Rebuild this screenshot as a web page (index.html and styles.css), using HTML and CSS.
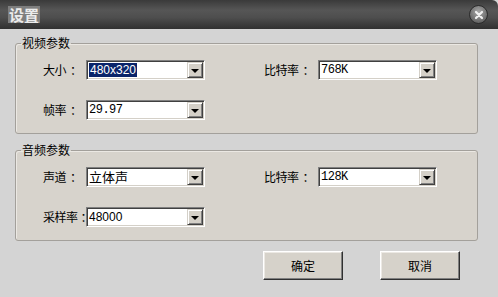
FILE: index.html
```html
<!DOCTYPE html>
<html lang="zh-CN">
<head>
    <meta charset="UTF-8">
    <title>设置</title>
    <link rel="stylesheet" href="styles.css">
</head>
<body>
    <div class="titlebar">
        <span class="title">设置</span>
        <span class="close-btn">
            <svg width="10" height="10" viewBox="0 0 10 10">
                <path d="M2 2 L8 8 M8 2 L2 8" stroke="#f2f2f2" stroke-width="2.2" stroke-linecap="round"/>
            </svg>
        </span>
    </div>

    <div class="content">
        <fieldset class="group">
            <legend>视频参数</legend>
            <div class="row">
                <div class="cell">
                    <span class="label">大小<span class="colon">：</span></span>
                    <div class="combo"><span class="val sans"><span class="sel">480x320</span></span><span class="drop"></span></div>
                </div>
                <div class="cell right">
                    <span class="label">比特率<span class="colon">：</span></span>
                    <div class="combo"><span class="val mono">768K</span><span class="drop"></span></div>
                </div>
            </div>
            <div class="row">
                <div class="cell">
                    <span class="label">帧率<span class="colon">：</span></span>
                    <div class="combo"><span class="val mono">29.97</span><span class="drop"></span></div>
                </div>
            </div>
        </fieldset>

        <fieldset class="group">
            <legend>音频参数</legend>
            <div class="row">
                <div class="cell">
                    <span class="label">声道<span class="colon">：</span></span>
                    <div class="combo"><span class="val">立体声</span><span class="drop"></span></div>
                </div>
                <div class="cell right">
                    <span class="label">比特率<span class="colon">：</span></span>
                    <div class="combo"><span class="val mono">128K</span><span class="drop"></span></div>
                </div>
            </div>
            <div class="row">
                <div class="cell">
                    <span class="label long">采样率<span class="colon">：</span></span>
                    <div class="combo"><span class="val sans">48000</span><span class="drop"></span></div>
                </div>
            </div>
        </fieldset>

        <div class="buttons">
            <button>确定</button>
            <button>取消</button>
        </div>
    </div>
</body>
</html>
```

FILE: styles.css
```css
body {
    margin: 0;
    padding: 0;
    width: 498px;
    height: 297px;
    overflow: hidden;
    background: #d4d4d4;
    font-family: "Noto Sans CJK SC", "Liberation Sans", sans-serif;
    font-size: 12px;
    color: #000;
}

.titlebar {
    height: 29px;
    display: flex;
    align-items: center;
    justify-content: space-between;
    padding: 0 10px 0 8px;
    background: linear-gradient(to bottom, #3a3a3a 0%, #565656 35%, #4e4e4e 60%, #303030 100%);
    border-top-right-radius: 6px;
}

.title {
    font-size: 15px;
    font-weight: bold;
    line-height: 17px;
    color: #ececec;
    background: #7e7e7e;
    padding: 0 1px;
}

.close-btn {
    width: 17px;
    height: 17px;
    border-radius: 50%;
    border: 1px solid #2b2b2b;
    background: radial-gradient(circle at 50% 35%, #a8a8a8, #6a6a6a 70%, #555);
    display: flex;
    align-items: center;
    justify-content: center;
}

.content {
    padding: 6px 20px 0 15px;
}

.group {
    margin: 0 0 8px 0;
    padding: 9px 0 13px 27px;
    border: 1px solid #a3a09b;
    border-radius: 3px;
    background: #d7d3cc;
    box-shadow: inset 1px 1px 0 #ebe8e3;
}

.group legend {
    margin-left: -22px;
    padding: 0 1px;
    line-height: 16px;
    font-size: 12px;
}

.row {
    display: flex;
    align-items: center;
    height: 20px;
}

.row + .row {
    margin-top: 20px;
}

.cell {
    display: flex;
    align-items: center;
}

.cell.right {
    margin-left: 59px;
}

.label {
    width: 43px;
    white-space: nowrap;
    line-height: 20px;
    letter-spacing: -0.5px;
}

.label .colon {
    padding-left: 4px;
}

.label.long .colon {
    padding-left: 3px;
    letter-spacing: -7px;
}

.right .label {
    width: 54px;
}

.combo {
    width: 119px;
    height: 20px;
    box-sizing: border-box;
    display: flex;
    align-items: center;
    padding: 1px;
    background: #fff;
    border: 1px solid;
    border-color: #808080 #fff #fff #808080;
    box-shadow: inset 1px 1px 0 #404040, inset -1px -1px 0 #d4d0c8;
    position: relative;
    z-index: 1;
}

.val {
    flex: 1;
    padding-left: 1px;
    line-height: 16px;
    white-space: nowrap;
    font-size: 13px;
}

.val.sans {
    font-family: "Liberation Sans", sans-serif;
    font-size: 12px;
}

.val.mono {
    font-family: "Liberation Mono", monospace;
    font-size: 12px;
    letter-spacing: -0.5px;
}

.sel {
    background: #0a246a;
    color: #fff;
    padding: 0 1px;
}

.drop {
    width: 16px;
    height: 16px;
    box-sizing: border-box;
    background: #d4d0c8;
    border: 1px solid;
    border-color: #d4d0c8 #404040 #404040 #d4d0c8;
    box-shadow: inset 1px 1px 0 #fff, inset -1px -1px 0 #808080;
    display: flex;
    align-items: center;
    justify-content: center;
}

.drop::after {
    content: "";
    border-left: 4px solid transparent;
    border-right: 4px solid transparent;
    border-top: 4px solid #000;
    margin-top: 1px;
}

.buttons {
    display: flex;
    justify-content: flex-end;
    gap: 37px;
    padding: 2px 18px 0 0;
}

.buttons button {
    width: 80px;
    height: 29px;
    box-sizing: border-box;
    font-family: "Noto Sans CJK SC", sans-serif;
    font-size: 12px;
    color: #000;
    background: #d6d2ca;
    border: 1px solid;
    border-color: #fff #303030 #303030 #fff;
    box-shadow: inset -1px -1px 0 #808080, inset 1px 1px 0 #ece9e4;
    padding: 0;
}
```
